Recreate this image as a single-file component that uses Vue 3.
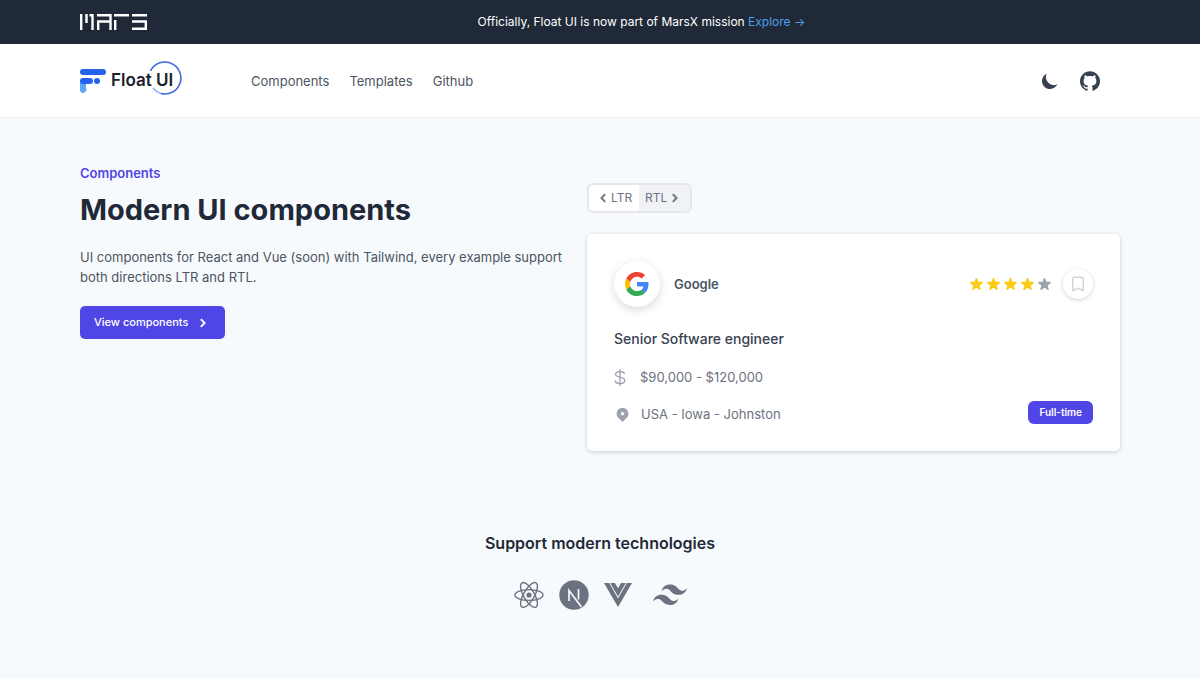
<script setup>
const navLinks = ['Components', 'Templates', 'Github']
const stars = [true, true, true, true, false]
</script>

<template>
  <div class="page">
    <div class="banner">
      <div class="container banner-row">
        <a href="#" class="mars" aria-label="Mars">
          <svg width="67" height="16" viewBox="0 0 67 16" fill="none" stroke="#fff" stroke-width="2.400">
            <path d="M1.200 0v16M6.500 0v9M12.500 16V1.200H9.500" />
            <path d="M17 1.200h13.500V16M18.200 16V7.500h12" />
            <path d="M34 1.200h15M35.200 6v10" />
            <path d="M52 1.200h15M52 7.500h13.800v7.300H52" />
          </svg>
        </a>
        <p class="banner-text">Officially, Float UI is now part of MarsX mission <a href="#">Explore →</a></p>
      </div>
    </div>

    <header class="header">
      <div class="container header-row">
        <a href="#" class="logo" aria-label="Float UI">
          <svg width="104" height="36" viewBox="0 0 104 36">
            <path d="M0 20h6v8a3 3 0 0 1-6 3z" fill="#60a5fa" />
            <rect x="0" y="9" width="26" height="6" rx="3" fill="#2563eb" />
            <rect x="0" y="18" width="13" height="6" rx="3" fill="#2563eb" />
            <circle cx="17" cy="21" r="3" fill="#2563eb" />
            <path d="M70.500 11A16 16 0 1 1 81 33.500" fill="none" stroke="#4169e1" stroke-width="1.600" />
            <path d="M81 33.500Q76 32 73 28" fill="none" stroke="#93b4f5" stroke-width="1.600" />
            <text x="31" y="26" class="logo-text">Float UI</text>
          </svg>
        </a>
        <nav class="nav">
          <a v-for="link in navLinks" :key="link" href="#">{{ link }}</a>
        </nav>
        <div class="actions">
          <button type="button" aria-label="Dark mode">
            <svg width="20" height="20" viewBox="0 0 20 20" fill="#374151"><path d="M17.293 13.293A8 8 0 016.707 2.707a8.001 8.001 0 1010.586 10.586z" /></svg>
          </button>
          <a href="#" aria-label="Github">
            <svg width="20" height="20" viewBox="0 0 24 24" fill="#374151"><path d="M12 .297c-6.630 0-12 5.373-12 12 0 5.303 3.438 9.800 8.205 11.385.6.113.82-.258.82-.577 0-.285-.010-1.040-.015-2.040-3.338.724-4.042-1.610-4.042-1.610C4.422 18.070 3.633 17.700 3.633 17.700c-1.087-.744.084-.729.084-.729 1.205.084 1.838 1.236 1.838 1.236 1.070 1.835 2.809 1.305 3.495.998.108-.776.417-1.305.760-1.605-2.665-.3-5.466-1.332-5.466-5.930 0-1.310.465-2.380 1.235-3.220-.135-.303-.540-1.523.105-3.176 0 0 1.005-.322 3.300 1.230.96-.267 1.980-.399 3-.405 1.020.006 2.040.138 3 .405 2.280-1.552 3.285-1.230 3.285-1.230.645 1.653.240 2.873.120 3.176.765.840 1.230 1.910 1.230 3.220 0 4.610-2.805 5.625-5.475 5.920.420.360.810 1.096.810 2.220 0 1.606-.015 2.896-.015 3.286 0 .315.210.690.825.570C20.565 22.092 24 17.592 24 12.297c0-6.627-5.373-12-12-12" /></svg>
          </a>
        </div>
      </div>
    </header>

    <main class="container">
      <section class="hero">
        <div class="intro">
          <p class="eyebrow">Components</p>
          <h1>Modern UI components</h1>
          <p class="lead">UI components for React and Vue (soon) with Tailwind, every example support both directions LTR and RTL.</p>
          <a href="#" class="cta">View components
            <svg width="16" height="16" viewBox="0 0 20 20" fill="#fff" stroke="#fff" stroke-width=".6"><path d="M7.293 14.707a1 1 0 010-1.414L10.586 10 7.293 6.707a1 1 0 011.414-1.414l4 4a1 1 0 010 1.414l-4 4a1 1 0 01-1.414 0z" /></svg>
          </a>
        </div>

        <div class="demo">
          <div class="toggle">
            <button type="button" class="active">
              <svg width="16" height="16" viewBox="0 0 20 20" fill="currentColor" stroke="currentColor" stroke-width=".6"><path d="M12.707 5.293a1 1 0 010 1.414L9.414 10l3.293 3.293a1 1 0 01-1.414 1.414l-4-4a1 1 0 010-1.414l4-4a1 1 0 011.414 0z" /></svg>LTR
            </button>
            <button type="button">RTL<svg width="16" height="16" viewBox="0 0 20 20" fill="currentColor" stroke="currentColor" stroke-width=".6"><path d="M7.293 14.707a1 1 0 010-1.414L10.586 10 7.293 6.707a1 1 0 011.414-1.414l4 4a1 1 0 010 1.414l-4 4a1 1 0 01-1.414 0z" /></svg>
            </button>
          </div>

          <article class="card">
            <div class="card-head">
              <span class="brand">
                <svg width="24" height="24" viewBox="0 0 48 48">
                  <path fill="#4285f4" d="M46.980 24.550c0-1.570-.150-3.090-.380-4.550H24v9.020h12.940c-.580 2.960-2.260 5.480-4.780 7.180l7.730 6c4.510-4.180 7.090-10.360 7.090-17.650z" />
                  <path fill="#34a853" d="M24 48c6.480 0 11.930-2.130 15.890-5.810l-7.730-6c-2.150 1.450-4.920 2.300-8.160 2.300-6.260 0-11.570-4.220-13.470-9.910l-7.980 6.190C6.510 42.620 14.620 48 24 48z" />
                  <path fill="#fbbc05" d="M10.530 28.590c-.480-1.450-.760-2.990-.760-4.590s.270-3.140.760-4.590l-7.980-6.190A23.900 23.900 0 0 0 0 24c0 3.880.920 7.540 2.560 10.780z" />
                  <path fill="#ea4335" d="M24 9.500c3.540 0 6.710 1.220 9.210 3.600l6.850-6.850C35.900 2.380 30.470 0 24 0 14.620 0 6.510 5.380 2.560 13.220l7.980 6.190C12.430 13.720 17.740 9.500 24 9.500z" />
                </svg>
              </span>
              <h2>Google</h2>
              <div class="stars" role="img" aria-label="4 of 5 stars">
                <svg v-for="(on, i) in stars" :key="i" :class="{ on }" width="17" height="17" viewBox="0 0 20 20"><path d="M9.049 2.927c.3-.921 1.603-.921 1.902 0l1.070 3.292a1 1 0 00.950.690h3.462c.969 0 1.371 1.240.588 1.810l-2.800 2.034a1 1 0 00-.364 1.118l1.070 3.292c.3.921-.755 1.688-1.540 1.118l-2.800-2.034a1 1 0 00-1.175 0l-2.800 2.034c-.784.570-1.838-.197-1.539-1.118l1.070-3.292a1 1 0 00-.364-1.118L2.980 8.720c-.783-.570-.380-1.810.588-1.810h3.461a1 1 0 00.951-.690l1.070-3.292z" /></svg>
              </div>
              <button type="button" class="save" aria-label="Save job">
                <svg width="18" height="18" viewBox="0 0 24 24" fill="none" stroke="#d1d5db" stroke-width="2" stroke-linecap="round" stroke-linejoin="round"><path d="M5 5a2 2 0 012-2h10a2 2 0 012 2v16l-7-3.500L5 21V5z" /></svg>
              </button>
            </div>
            <h3>Senior Software engineer</h3>
            <div class="card-foot">
              <ul>
                <li>
                  <svg width="12" height="17" viewBox="0 0 12 17" fill="none" stroke="#9ca3af" stroke-width="1.300"><path d="M10.500 5C10.200 3.300 8.600 2.500 6 2.500S1.500 3.500 1.500 5.300C1.500 9.200 10.800 7 10.800 11.400c0 2-1.900 3.100-4.800 3.100S1.400 13.300 1 11.500M6 0v17" /></svg>
                  <span>$90,000 - $120,000</span>
                </li>
                <li>
                  <svg width="17" height="17" viewBox="0 0 20 20" fill="#9ca3af"><path fill-rule="evenodd" d="M5.050 4.050a7 7 0 119.900 9.900L10 18.900l-4.950-4.950a7 7 0 010-9.900zM10 11a2 2 0 100-4 2 2 0 000 4z" /></svg>
                  <span>USA - Iowa - Johnston</span>
                </li>
              </ul>
              <span class="tag">Full-time</span>
            </div>
          </article>
        </div>
      </section>

      <section class="tech">
        <h2>Support modern technologies</h2>
        <div class="tech-row">
          <svg width="30" height="30" viewBox="0 0 30 30" fill="none" stroke="#6b7280" stroke-width="1.400">
            <ellipse cx="15" cy="15" rx="14" ry="5.400" />
            <ellipse cx="15" cy="15" rx="14" ry="5.400" transform="rotate(60 15 15)" />
            <ellipse cx="15" cy="15" rx="14" ry="5.400" transform="rotate(120 15 15)" />
            <circle cx="15" cy="15" r="2.600" fill="#6b7280" stroke="none" />
          </svg>
          <svg width="30" height="30" viewBox="0 0 30 30">
            <circle cx="15" cy="15" r="14.700" fill="#6b7280" />
            <path d="M10 21V10.500L22.500 27" fill="none" stroke="#f7fafc" stroke-width="1.700" />
            <path d="M19.500 9v10.500" stroke="#f7fafc" stroke-width="1.700" />
          </svg>
          <svg width="28" height="26" viewBox="0 0 28 26" fill="#6b7280">
            <path d="M0 1h5.200L14 16.500 22.800 1H28L14 25z" />
            <path d="M6.200 1h4.700L14 6.300 17.100 1h4.700L14 14.600z" />
          </svg>
          <svg width="40" height="22" viewBox="-9.500 0 63.500 33" fill="#6b7280"><path d="M27 0c-7.200 0-11.700 3.600-13.500 10.800 2.700-3.600 5.850-4.950 9.450-4.050 2.054.513 3.522 2.004 5.147 3.653C30.744 13.090 33.808 16.200 40.500 16.200c7.200 0 11.700-3.600 13.500-10.800-2.700 3.600-5.850 4.950-9.450 4.050-2.054-.513-3.522-2.004-5.147-3.653C36.756 3.110 33.692 0 27 0zM13.500 16.200C6.300 16.200 1.800 19.800 0 27c2.700-3.600 5.850-4.950 9.450-4.050 2.054.514 3.522 2.004 5.147 3.653C17.244 29.290 20.308 32.400 27 32.400c7.200 0 11.700-3.600 13.500-10.800-2.700 3.600-5.850 4.950-9.450 4.050-2.054-.513-3.522-2.004-5.147-3.653C23.256 19.310 20.192 16.200 13.500 16.200z" /></svg>
        </div>
      </section>
    </main>
  </div>
</template>

<style>
body { margin: 0; background: #f7fafc; }
</style>

<style scoped>
.page { min-height: 100vh; background: #f7fafc; color: #1f2937; font-family: Inter, "Liberation Sans", sans-serif; font-size: 13px; line-height: 20px; }
.page * { box-sizing: border-box; }
h1, h2, h3, p, ul { margin: 0; padding: 0; }
a { color: inherit; text-decoration: none; }
button { font: inherit; color: inherit; border: 0; padding: 0; background: none; cursor: pointer; }
svg { display: block; flex: none; }
.container { max-width: 1088px; margin: 0 auto; padding: 0 24px; }

.banner { background: #1f2937; color: #fff; }
.banner-row { display: flex; align-items: center; padding-top: 12px; padding-bottom: 12px; }
.banner-text { flex: 1; margin-left: 16px; text-align: center; font-size: 12px; font-weight: 400; }
.banner-text a { color: #4f9cf0; }

.header { background: #fff; border-bottom: 1px solid #edf0f4; }
.header-row { display: flex; align-items: center; padding-top: 16px; padding-bottom: 15px; }
.logo { align-self: flex-start; }
.logo-text { font-size: 17px; font-weight: 600; fill: #18202f; }
.nav { display: flex; gap: 20px; margin-left: 67px; color: #4b5563; line-height: 42px; }
.actions { display: flex; align-items: center; gap: 20px; margin-left: auto; padding-right: 20px; }

.hero { display: grid; grid-template-columns: minmax(0, 490px) minmax(0, 533px); justify-content: space-between; padding-top: 45px; }
.eyebrow { color: #4f46e5; font-weight: 600; }
h1 { margin-top: 10px; font-size: 29px; line-height: 34px; font-weight: 700; }
.lead { margin-top: 20px; color: #4b5563; }
.cta { display: inline-flex; align-items: center; gap: 7px; margin-top: 19px; padding: 7px 14px; border-radius: 5px; background: #4f46e5; color: #fff; font-size: 11px; line-height: 19px; font-weight: 500; }

.demo { padding-top: 20px; }
.toggle { display: inline-flex; border: 2px solid #e5e7eb; border-radius: 6px; background: #f1f2f6; overflow: hidden; vertical-align: top; color: #6b7280; font-size: 12px; }
.toggle button { display: flex; align-items: center; padding: 3px 7px 3px 6px; }
.toggle .active { background: #fff; }
.card { margin-top: 21px; padding: 27px; border-radius: 5px; background: #fff; box-shadow: 0 1px 4px rgba(0, 0, 0, 0.18); }
.card-head { display: flex; align-items: center; }
.brand { display: grid; place-items: center; width: 46px; height: 46px; border-radius: 50%; background: #fff; box-shadow: 0 3px 10px rgba(0, 0, 0, 0.15); }
.card-head h2 { margin-left: 14px; color: #4b5563; font-size: 13px; font-weight: 600; }
.stars { display: flex; margin-left: auto; fill: #9ca3af; }
.stars .on { fill: #facc15; }
.save { display: grid; place-items: center; width: 30px; height: 30px; margin-left: 10px; border-radius: 50%; box-shadow: 0 1px 4px rgba(0, 0, 0, 0.18); }
.card h3 { margin-top: 22px; font-size: 14px; font-weight: 500; color: #374151; }
.card-foot { display: flex; align-items: flex-end; justify-content: space-between; margin-top: 18px; }
ul { display: grid; gap: 17px; list-style: none; color: #6b7280; }
li { display: flex; align-items: center; gap: 10px; }
li:first-child { gap: 14px; }
.tag { padding: 2px 11px; border-radius: 6px; background: #4f46e5; color: #fff; font-size: 10px; line-height: 19px; font-weight: 600; }

.tech { padding: 80px 0 64px; text-align: center; }
.tech h2 { font-size: 16px; line-height: 24px; font-weight: 600; }
.tech-row { display: flex; align-items: center; justify-content: center; gap: 15px; margin-top: 25px; }
</style>
